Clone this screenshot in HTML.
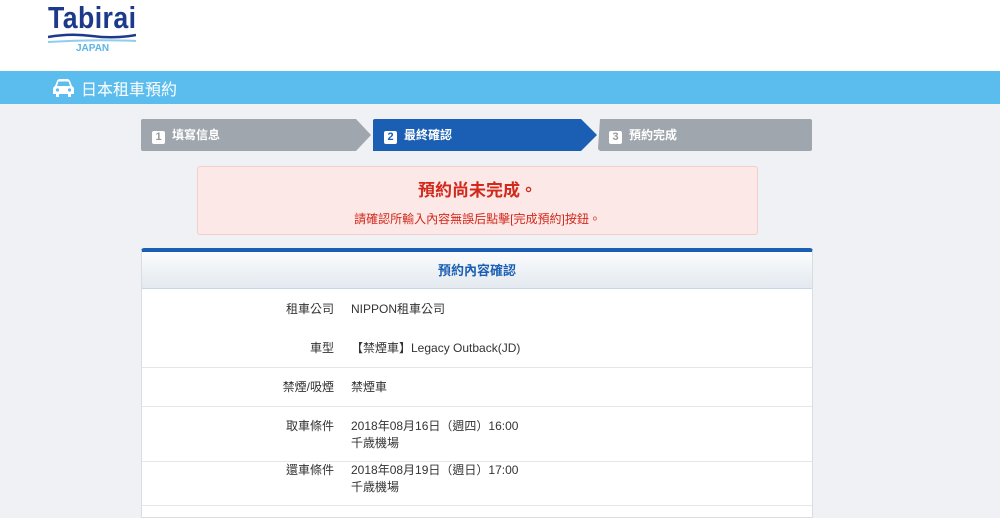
<!DOCTYPE html>
<html><head><meta charset="utf-8"><style>
*{margin:0;padding:0;box-sizing:border-box}
body{width:1000px;height:518px;overflow:hidden;background:#eff1f5;font-family:"Liberation Sans","Noto Sans CJK TC",sans-serif;position:relative}
.hdr{position:absolute;left:0;top:0;width:1000px;height:71px;background:#fff}
.logo{position:absolute;left:48px;top:0px;font-weight:bold;font-size:31px;color:#1d3a8a;transform:scaleX(0.86);transform-origin:left top;letter-spacing:0.5px}
.jp{position:absolute;left:76px;top:43px;font-size:10px;color:#5bb5e5;font-weight:bold}
.bar{position:absolute;left:0;top:71px;width:1000px;height:33px;background:#5bbdee;color:#fff;font-size:16px}
.bar span{position:absolute;left:81px;top:5px}
.step{position:absolute;top:119px;height:32px;color:#fff;font-size:12px;font-weight:bold;line-height:32px}
.num{display:inline-block;width:13px;height:13px;background:#fff;border-radius:2px;color:#999;font-size:11px;line-height:13px;text-align:center;margin:0 7px 0 11px;vertical-align:-1px}
.alert{position:absolute;left:197px;top:166px;width:561px;height:69px;background:#fce8e6;border:1px solid #f3cfcb;border-radius:3px;text-align:center;color:#d2291d}
.panel{position:absolute;left:141px;top:248px;width:672px;height:270px;background:#fff;border:1px solid #d8dde3;border-top:4px solid #1a5fb4;border-radius:3px 3px 0 0}
.ph{height:37px;background:linear-gradient(#fbfcfd,#e3e9ef);border-bottom:1px solid #c9d6e3;text-align:center;color:#1a5fb4;font-weight:bold;font-size:13px;line-height:37px}
.row{position:absolute;left:0;width:670px;font-size:12px;color:#333;line-height:17px}
.row b{position:absolute;right:478px;font-weight:normal;text-align:right;white-space:nowrap}
.row i{position:absolute;left:209px;font-style:normal;white-space:nowrap}
.ln{position:absolute;left:0;width:670px;height:1px;background:#e4e6e9}
</style></head><body>
<div class="hdr">
<div class="logo">Tabirai</div>
<svg style="position:absolute;left:48px;top:33px" width="88" height="12"><path d="M0 4 Q22 0 44 3 Q66 6 88 2" stroke="#1d3a8a" stroke-width="2.5" fill="none"/><path d="M0 9 Q44 6 88 8" stroke="#8fcdef" stroke-width="2" fill="none"/></svg>
<div class="jp">JAPAN</div>
</div>
<div class="bar">
<svg style="position:absolute;left:53px;top:8px" width="21" height="18" viewBox="0 0 21 18"><path d="M4 2 Q5 0 7 0 H14 Q16 0 17 2 L19 7 Q21 8 21 10 V15 H18 V18 H15 V15 H6 V18 H3 V15 H0 V10 Q0 8 2 7 Z" fill="#fff"/><path d="M5.5 2.5 H15.5 L17 7 H4 Z" fill="#5bbdee"/><circle cx="4.5" cy="11" r="1.6" fill="#5bbdee"/><circle cx="16.5" cy="11" r="1.6" fill="#5bbdee"/></svg>
<span>日本租車預約</span></div>
<svg style="position:absolute;left:141px;top:119px" width="672" height="32">
<path d="M2 0 H215 L230 16 L215 32 H2 Q0 32 0 30 V2 Q0 0 2 0Z" fill="#a0a6ad"/>
<path d="M234 0 H440 L456 16 L440 32 H232 V2 Q232 0 234 0Z" fill="#1a5fb4"/>
<path d="M459 0 H669 Q671 0 671 2 V30 Q671 32 669 32 H459 L457 30 Z" fill="#a0a6ad"/>
</svg>
<div class="step" style="left:141px"><span class="num">1</span>填寫信息</div>
<div class="step" style="left:373px"><span class="num" style="color:#1a5fb4">2</span>最終確認</div>
<div class="step" style="left:598px"><span class="num">3</span>預約完成</div>
<div class="alert"><div style="font-size:17px;font-weight:bold;margin-top:9px">預約尚未完成。</div><div style="font-size:12px;margin-top:9px">請確認所輸入內容無誤后點擊[完成預約]按鈕。</div></div>
<div class="panel"><div class="ph">預約內容確認</div>
<div class="row" style="top:49px"><b>租車公司</b><i>NIPPON租車公司</i></div>
<div class="row" style="top:88px"><b>車型</b><i>【禁煙車】Legacy Outback(JD)</i></div>
<div class="ln" style="top:115px"></div>
<div class="row" style="top:127px"><b>禁煙/吸煙</b><i>禁煙車</i></div>
<div class="ln" style="top:154px"></div>
<div class="row" style="top:166px"><b>取車條件</b><i>2018年08月16日（週四）16:00<br>千歳機場</i></div>
<div class="ln" style="top:209px"></div>
<div class="row" style="top:210px"><b>還車條件</b><i>2018年08月19日（週日）17:00<br>千歳機場</i></div>
<div class="ln" style="top:253px"></div>
</div>
</body></html>
